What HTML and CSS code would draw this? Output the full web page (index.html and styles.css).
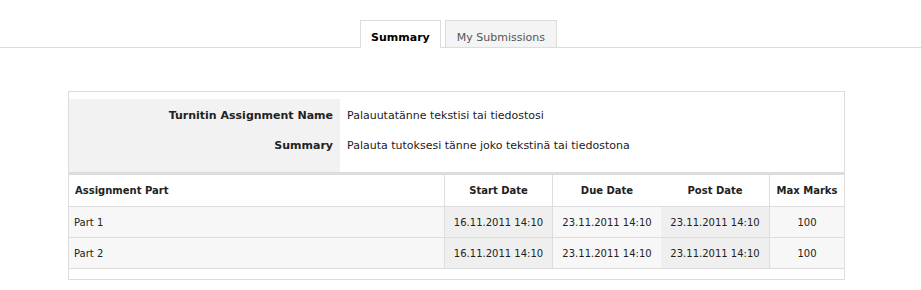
FILE: index.html
```html
<!DOCTYPE html>
<html>
<head>
<meta charset="utf-8">
<link rel="stylesheet" href="styles.css">
</head>
<body>
<div class="tabs">
  <div class="tab active">Summary</div>
  <div class="tab">My Submissions</div>
</div>
<div class="box">
  <div class="summary">
    <div class="srow"><div class="slabel">Turnitin Assignment Name</div><div class="svalue">Palauutatänne tekstisi tai tiedostosi</div></div>
    <div class="srow"><div class="slabel">Summary</div><div class="svalue">Palauta tutoksesi tänne joko tekstinä tai tiedostona</div></div>
    <div class="srow spacer"><div class="slabel"></div><div class="svalue"></div></div>
  </div>
  <div class="parts">
    <div class="prow head">
      <div class="c c1">Assignment Part</div>
      <div class="c c2">Start Date</div>
      <div class="c c3">Due Date</div>
      <div class="c c4">Post Date</div>
      <div class="c c5">Max Marks</div>
    </div>
    <div class="prow data">
      <div class="c c1">Part 1</div>
      <div class="c c2">16.11.2011 14:10</div>
      <div class="c c3">23.11.2011 14:10</div>
      <div class="c c4">23.11.2011 14:10</div>
      <div class="c c5">100</div>
    </div>
    <div class="prow data">
      <div class="c c1">Part 2</div>
      <div class="c c2">16.11.2011 14:10</div>
      <div class="c c3">23.11.2011 14:10</div>
      <div class="c c4">23.11.2011 14:10</div>
      <div class="c c5">100</div>
    </div>
  </div>
</div>
</body>
</html>
```
FILE: styles.css
```css
html, body {
  margin: 0;
  padding: 0;
  background: #fff;
  font-family: "DejaVu Sans", Verdana, sans-serif;
  font-size: 11px;
  color: #333;
}
.tabs {
  display: flex;
  justify-content: center;
  gap: 4px;
  padding-top: 20px;
  padding-right: 4px;
  border-bottom: 1px solid #ddd;
  height: 27px;
  box-sizing: content-box;
}
.tab {
  display: flex;
  align-items: flex-start;
  border: 1px solid #ddd;
  border-bottom: 0;
  height: 16px;
  padding: 10px 11px 0 11px;
  box-sizing: content-box;
  line-height: 14px;
  background: #f4f4f4;
  color: #555;
}
.tab.active {
  background: #fff;
  color: #000;
  font-weight: bold;
  padding: 10px 10px 0 10px;
  height: 17px;
  margin-bottom: -1px;
  position: relative;
}
.box {
  margin: 43px 0 0 68px;
  width: 777px;
  box-sizing: border-box;
  border: 1px solid #ddd;
  padding: 7px 0 10px 0;
}
.summary {
  padding-top: 1px;
  background: linear-gradient(to right, #f2f2f2 271px, #fff 271px);
}
.srow {
  display: flex;
  height: 30px;
  align-items: center;
}
.srow.spacer {
  height: 12px;
}
.slabel {
  width: 271px;
  box-sizing: border-box;
  padding-right: 7px;
  text-align: right;
  font-weight: bold;
  color: #222;
}
.svalue {
  padding-left: 7px;
  color: #222;
}
.parts {
  border-top: 3px solid #ddd;
}
.prow {
  display: grid;
  grid-template-columns: 375px 108px 109px 108px 75px;
  border-bottom: 1px solid #ddd;
}
.prow.head {
  height: 31px;
}
.prow.data {
  height: 30px;
}
.c {
  display: flex;
  align-items: center;
  justify-content: center;
  box-sizing: border-box;
}
.c1 {
  justify-content: flex-start;
  padding-left: 5px;
}
.c2, .c3, .c5 {
  border-left: 1px solid #ddd;
}
.head .c {
  font-weight: bold;
  font-size: 10px;
  color: #222;
}
.head .c1 {
  padding-left: 6px;
}
.data .c {
  background: #f7f7f7;
  color: #222;
  font-size: 10px;
}
.data .c2, .data .c4 {
  background: #efefef;
}
```
